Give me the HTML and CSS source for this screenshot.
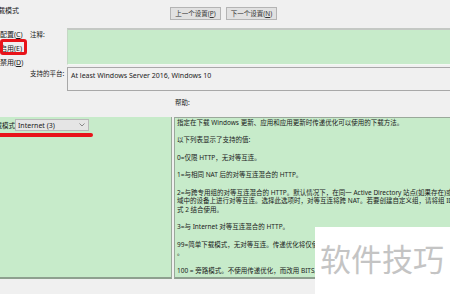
FILE: index.html
```html
<!DOCTYPE html>
<html lang="zh-CN">
<head>
    <meta charset="UTF-8">
    <title>下载模式</title>
    <link rel="stylesheet" href="styles.css">
</head>
<body>
    <div class="window">
        <div class="header">
            <div class="title">下载模式</div>
            <div class="nav">
                <button class="nav-button">上一个设置(<u>P</u>)</button>
                <button class="nav-button">下一个设置(<u>N</u>)</button>
            </div>
        </div>

        <div class="upper">
            <div class="states">
                <div class="state">未配置(<u>C</u>)</div>
                <div class="state selected">已启用(<u>E</u>)</div>
                <div class="state">已禁用(<u>D</u>)</div>
            </div>
            <div class="fields">
                <div class="field-label">注释:</div>
                <div class="notes"></div>
                <div class="field-label">支持的平台:</div>
                <div class="platform">At least Windows Server 2016, Windows 10</div>
            </div>
        </div>

        <div class="section-labels">
            <div class="options-title"></div>
            <div class="help-title">帮助:</div>
        </div>

        <div class="panels">
            <div class="options">
                <div class="option-row">
                    <span class="option-label">下载模式:</span>
                    <div class="select">
                        <span>Internet (3)</span>
                        <svg width="6" height="4" viewBox="0 0 6 4"><path d="M0.5 0.5 L3 3 L5.5 0.5" fill="none" stroke="#707070" stroke-width="0.8"/></svg>
                    </div>
                </div>
                <div class="underline"></div>
            </div>
            <div class="help">
                <p>指定在下载 Windows 更新、应用和应用更新时传递优化可以使用的下载方法。</p>
                <p>以下列表显示了支持的值:</p>
                <p>0=仅限 HTTP，无对等互连。</p>
                <p>1=与相同 NAT 后的对等互连混合的 HTTP。</p>
                <p>2=与跨专用组的对等互连混合的 HTTP。默认情况下，在同一 Active Directory 站点(如果存在)或同一<br>域中的设备上进行对等互连。选择此选项时，对等互连将跨 NAT。若要创建自定义组，请将组 ID 与模<br>式 2 结合使用。</p>
                <p>3=与 Internet 对等互连混合的 HTTP。</p>
                <p>99=简单下载模式，无对等互连。传递优化将仅使用 HTTP 源进行下载，不会尝试联系传递优化云服务<br>。</p>
                <p>100 = 旁路模式。不使用传递优化，而改用 BITS。</p>
            </div>
        </div>

        <div class="watermark">软件技巧</div>
    </div>
</body>
</html>
```

FILE: styles.css
```css
body {
    margin: 0;
    background-color: #f0f0f0;
    font-family: "Noto Sans", "Noto Sans CJK SC", sans-serif;
    font-size: 6.5px;
    color: #1a1a1a;
}
.window {
    position: relative;
    width: 450px;
    height: 294px;
    overflow: hidden;
}
.header {
    display: flex;
    align-items: flex-start;
    height: 28px;
}
.title {
    margin-left: -9px;
    padding-top: 5px;
    font-size: 7px;
    width: 179px;
}
.nav {
    display: flex;
    gap: 5px;
    margin-top: 7px;
}
.nav-button {
    font-family: inherit;
    font-size: 6.5px;
    color: #333;
    background-color: #e1e1e1;
    border: 1px solid #b4b4b4;
    height: 13px;
    width: 51px;
    padding: 0;
    line-height: 11px;
}
.upper {
    display: flex;
    height: 63px;
}
.states {
    width: 30px;
}
.state {
    position: relative;
    height: 14px;
    line-height: 14px;
    margin-left: -7px;
    font-size: 7px;
    white-space: nowrap;
}
.state.selected::after {
    content: "";
    position: absolute;
    left: 7px;
    top: -3px;
    width: 27px;
    height: 16px;
    border: 3px solid #e8141a;
    border-radius: 3px;
    box-sizing: border-box;
}
.fields {
    flex: 1;
    display: grid;
    grid-template-columns: 37px 1fr;
    grid-template-rows: 37px 24px;
    row-gap: 2px;
}
.field-label {
    padding-top: 1px;
    white-space: nowrap;
}
.notes {
    background-color: #c7ebca;
    border-top: 2px solid #c4c8c4;
    border-left: 1px solid #c4d8c4;
    border-bottom: 1px solid #f4f8f4;
}
.platform {
    border: 1px solid #a8a8a8;
    border-right: none;
    padding: 3px 3px;
    font-size: 7px;
    color: #222;
}
.section-labels {
    display: flex;
    height: 26px;
    align-items: center;
}
.options-title {
    width: 175px;
}
.help-title {
    padding-bottom: 4px;
}
.panels {
    display: flex;
    gap: 2px;
    height: 162px;
}
.options {
    width: 172px;
    background-color: #c7ebca;
    border-right: 1px solid #9aa99a;
    border-bottom: 2px solid #8ea08f;
    box-sizing: border-box;
    padding-top: 2px;
}
.option-row {
    display: flex;
    align-items: center;
}
.option-label {
    width: 15px;
    direction: rtl;
    overflow: hidden;
    white-space: nowrap;
}
.select {
    display: flex;
    align-items: center;
    justify-content: space-between;
    width: 74px;
    height: 12px;
    box-sizing: border-box;
    background-color: #e5e5e5;
    border: 1px solid #b9b9b9;
    padding: 0 3px 0 2px;
    font-size: 7px;
}
.underline {
    width: 93px;
    height: 4px;
    margin-top: 2px;
    background-color: #e8141a;
    border-radius: 0 2px 2px 0;
}
.help {
    flex: 1;
    background-color: #c7ebca;
    border: 1px solid #9aa99a;
    border-right: none;
    border-bottom: 2px solid #8ea08f;
    padding: 0 0 0 2px;
    white-space: nowrap;
    overflow: hidden;
    line-height: 8.7px;
}
.help p {
    margin: 0 0 8.7px;
}
.help p:first-child {
    margin-top: 1px;
}
.watermark {
    position: absolute;
    left: 315px;
    top: 227px;
    right: 0;
    bottom: 0;
    background-color: #fff;
    color: #c4c4c4;
    font-family: "Noto Sans CJK SC", sans-serif;
    font-size: 31px;
    padding: 13px 0 0 5px;
    line-height: 36px;
}
```
